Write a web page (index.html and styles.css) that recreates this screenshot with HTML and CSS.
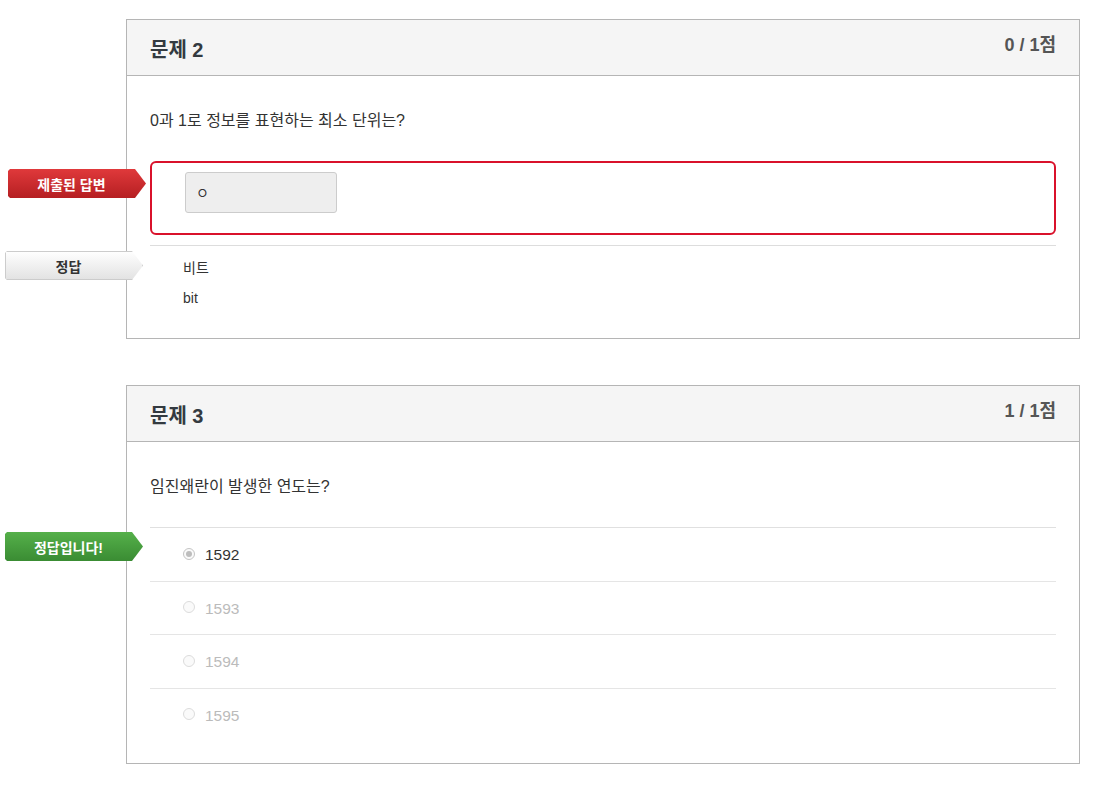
FILE: index.html
```html
<!DOCTYPE html>
<html lang="ko">
<head>
<meta charset="utf-8">
<link rel="stylesheet" href="styles.css">
</head>
<body>
<div class="page">
  <section class="card">
    <header class="card-head">
      <h2 class="card-title">문제 2</h2>
      <div class="card-score">0 / 1점</div>
    </header>
    <div class="card-body">
      <p class="question">0과 1로 정보를 표현하는 최소 단위는?</p>
      <div class="submitted">
        <span class="ribbon ribbon-red">제출된 답변</span>
        <div class="answer-input">ㅇ</div>
      </div>
      <div class="correct">
        <span class="ribbon ribbon-grey">정답</span>
        <div class="correct-item">비트</div>
        <div class="correct-item">bit</div>
      </div>
    </div>
  </section>

  <section class="card">
    <header class="card-head">
      <h2 class="card-title">문제 3</h2>
      <div class="card-score">1 / 1점</div>
    </header>
    <div class="card-body card-body-options">
      <p class="question">임진왜란이 발생한 연도는?</p>
      <ul class="options">
        <li class="option option-selected">
          <span class="ribbon ribbon-green">정답입니다!</span>
          <span class="radio radio-checked"></span>
          <span class="option-label">1592</span>
        </li>
        <li class="option">
          <span class="radio"></span>
          <span class="option-label">1593</span>
        </li>
        <li class="option">
          <span class="radio"></span>
          <span class="option-label">1594</span>
        </li>
        <li class="option">
          <span class="radio"></span>
          <span class="option-label">1595</span>
        </li>
      </ul>
    </div>
  </section>
</div>
</body>
</html>
```

FILE: styles.css
```css
* { box-sizing: border-box; }

body {
  margin: 0;
  background: #ffffff;
  font-family: "Liberation Sans", "Noto Sans CJK KR", sans-serif;
  color: #333333;
}

.page {
  width: 954px;
  margin-left: 126px;
  padding-top: 19px;
  display: flex;
  flex-direction: column;
  gap: 46px;
}

.card {
  border: 1px solid #b5b5b5;
  background: #ffffff;
}

.card-head {
  height: 56px;
  background: #f5f5f5;
  border-bottom: 1px solid #b5b5b5;
  display: flex;
  justify-content: space-between;
  align-items: flex-start;
  padding: 0 23px;
}

.card-title {
  margin: 0;
  padding-top: 19px;
  font-size: 20px;
  line-height: 22px;
  font-weight: bold;
  color: #333a40;
}

.card-score {
  padding-top: 14px;
  font-size: 18px;
  line-height: 22px;
  font-weight: bold;
  color: #555555;
}

.card-body {
  padding: 34px 23px 25px;
}

.question {
  margin: 0;
  font-size: 16px;
  line-height: 22px;
  color: #333333;
}

.submitted {
  position: relative;
  margin-top: 29px;
  height: 74px;
  border: 2px solid #d9112b;
  border-radius: 6px;
  padding: 9px 0 0 33px;
}

.answer-input {
  width: 152px;
  height: 41px;
  background: #eeeeee;
  border: 1px solid #cccccc;
  border-radius: 3px;
  padding: 10px 10px;
  font-size: 14px;
  line-height: 20px;
  color: #333333;
}

.correct {
  position: relative;
  margin-top: 10px;
  border-top: 1px solid #dddddd;
  padding: 7px 0 0 33px;
}

.correct-item {
  font-size: 14px;
  line-height: 30px;
  color: #333333;
}

.card-body-options {
  padding-bottom: 22px;
}

.options {
  list-style: none;
  margin: 29px 0 0;
  padding: 0;
}

.option {
  position: relative;
  height: 53.5px;
  border-top: 1px solid #e5e5e5;
  display: flex;
  align-items: center;
  padding-left: 33px;
  padding-top: 2px;
  gap: 10px;
}

.option:first-child {
  border-top-color: #e0e0e0;
}

.radio {
  width: 12px;
  height: 12px;
  margin-top: -3px;
  border-radius: 50%;
  border: 1px solid #dcdcdc;
  background: #fafafa;
  display: inline-flex;
  align-items: center;
  justify-content: center;
}

.radio-checked {
  border-color: #c4c4c4;
}

.radio-checked::after {
  content: "";
  width: 6px;
  height: 6px;
  border-radius: 50%;
  background: #bdbdbd;
}

.option-label {
  font-size: 15.5px;
  line-height: 20px;
  color: #bbbbbb;
}

.option-selected .option-label {
  color: #333333;
}

.ribbon {
  position: absolute;
  width: 138px;
  height: 29px;
  padding-right: 11px;
  display: flex;
  align-items: center;
  justify-content: center;
  font-size: 14px;
  font-weight: bold;
  clip-path: polygon(0 2px, 2px 0, calc(100% - 11px) 0, 100% 50%, calc(100% - 11px) 100%, 2px 100%, 0 calc(100% - 2px));
}

.ribbon-red {
  left: -144px;
  top: 6px;
  width: 138px;
  color: #ffffff;
  background: linear-gradient(#e0393b, #b51f22);
}

.ribbon-grey {
  left: -145px;
  top: 5px;
  color: #333333;
  background: linear-gradient(#ffffff, #e2e2e2);
  box-shadow: inset 0 0 0 1px #cccccc;
}

.ribbon-green {
  left: -145px;
  top: 4px;
  color: #ffffff;
  background: linear-gradient(#55b04a, #3a8c33);
}
```
